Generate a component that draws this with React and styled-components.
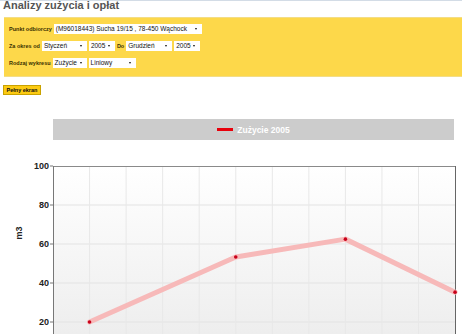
import styled, { createGlobalStyle } from 'styled-components';

const GlobalStyle = createGlobalStyle`
  html, body {
    margin: 0;
    padding: 0;
    background: #fff;
  }
  body {
    border-top: 1px solid #d3dce6;
    font-family: 'Liberation Sans', Arial, sans-serif;
    overflow: hidden;
  }
`;

const Page = styled.div`
  width: 462px;
  height: 333px;
  overflow: hidden;
`;

const Title = styled.h1`
  margin: -2px 0 0 3px;
  font-size: 11px;
  line-height: 12px;
  font-weight: bold;
  color: #555;
`;

const Filters = styled.div`
  margin: 6px 0 0 4px;
  height: 52px;
  padding: 6px 0 0 5px;
  background: #fdd84a;
  border-top: 1px solid #f3dd86;
  border-bottom: 1px solid #f3dd86;
  display: flex;
  flex-direction: column;
  gap: 7px;
`;

const Row = styled.div`
  display: flex;
  align-items: center;
  height: 10px;
  gap: 2px;
`;

const Label = styled.span`
  font-size: 5.5px;
  font-weight: bold;
  color: #3a3000;
  white-space: nowrap;
`;

const Select = styled.div`
  position: relative;
  box-sizing: border-box;
  width: ${(p) => p.$w}px;
  height: 10px;
  padding-left: 2px;
  background: #fff;
  font-size: 6.5px;
  line-height: 10px;
  color: #111;
  white-space: nowrap;
  overflow: hidden;
  &::after {
    content: '';
    position: absolute;
    right: 5px;
    top: 4px;
    border-left: 1.5px solid transparent;
    border-right: 1.5px solid transparent;
    border-top: 2px solid #111;
  }
`;

const FullButton = styled.button`
  display: block;
  margin: 8px 0 0 3px;
  width: 38px;
  height: 10px;
  padding: 0;
  background: #fcca12;
  border: 1px solid #c9a200;
  font-family: inherit;
  font-size: 5.5px;
  font-weight: bold;
  color: #111;
`;

const Chart = styled.section`
  margin-top: 24px;
`;

const ChartTitle = styled.div`
  margin-left: 53px;
  width: 401px;
  height: 21px;
  background: #cccccc;
  display: flex;
  align-items: center;
  justify-content: center;
  gap: 4px;
`;

const LegendLine = styled.span`
  width: 16px;
  height: 3px;
  background: #e8000b;
`;

const LegendText = styled.span`
  font-size: 8.5px;
  font-weight: bold;
  color: #fff;
`;

const Plot = styled.svg`
  display: block;
  margin-top: 6px;
`;

const TOP = 145;
const yOf = (v) => 360 - v * 1.95;
const colX = (k) => 53 + 36.55 * k;
const data = [
  [1, 20],
  [5, 53.3],
  [8, 62.5],
  [11, 35.3],
];

function LineChart() {
  const ticks = [100, 80, 60, 40, 20];
  const pts = data.map(([k, v]) => `${colX(k)},${yOf(v)}`).join(' ');
  return (
    <Plot width="462" height="189" viewBox={`0 ${TOP} 462 189`}>
      <defs>
        <linearGradient id="bg" x1="0" y1="0" x2="0" y2="1">
          <stop offset="0" stopColor="#ffffff" />
          <stop offset="1" stopColor="#ebebeb" />
        </linearGradient>
      </defs>
      <rect x="53" y="165" width="402" height="195" fill="url(#bg)" />
      {[80, 60, 40, 20].map((v) => (
        <line key={v} x1="53" x2="455" y1={yOf(v)} y2={yOf(v)} stroke="#e3e3e3" />
      ))}
      {Array.from({ length: 10 }, (_, i) => (
        <line key={i} x1={colX(i + 1)} x2={colX(i + 1)} y1="165" y2="334" stroke="#e8e8e8" />
      ))}
      <line x1="53" x2="455" y1="165.5" y2="165.5" stroke="#8a8a8a" />
      <line x1="53.5" x2="53.5" y1="165" y2="334" stroke="#777" />
      <line x1="455.5" x2="455.5" y1="165" y2="334" stroke="#666" />
      {ticks.map((v) => (
        <g key={v}>
          <line x1="50" x2="53" y1={yOf(v)} y2={yOf(v)} stroke="#777" />
          <text
            x="49"
            y={yOf(v) + 3}
            textAnchor="end"
            fontSize="9"
            fontWeight="bold"
            fill="#222"
            fontFamily="Liberation Sans, Arial, sans-serif"
          >
            {v}
          </text>
        </g>
      ))}
      <text
        x="0"
        y="0"
        transform="translate(22 232) rotate(-90)"
        textAnchor="middle"
        fontSize="9"
        fontWeight="bold"
        fill="#222"
        fontFamily="Liberation Sans, Arial, sans-serif"
      >
        m3
      </text>
      <polyline
        points={pts}
        fill="none"
        stroke="#f7b9b9"
        strokeWidth="5"
        strokeLinejoin="round"
        strokeLinecap="round"
      />
      {data.map(([k, v]) => (
        <circle key={k} cx={colX(k)} cy={yOf(v)} r="1.8" fill="#c8001a" />
      ))}
    </Plot>
  );
}

export default function App() {
  return (
    <Page>
      <GlobalStyle />
      <Title>Analizy zużycia i opłat</Title>
      <Filters>
        <Row>
          <Label>Punkt odbiorczy</Label>
          <Select $w={148}>(M96018443) Sucha 19/15 , 78-450 Wąchock</Select>
        </Row>
        <Row>
          <Label>Za okres od</Label>
          <Select $w={45}>Styczeń</Select>
          <Select $w={26}>2005</Select>
          <Label>Do</Label>
          <Select $w={46}>Grudzień</Select>
          <Select $w={26}>2005</Select>
        </Row>
        <Row>
          <Label>Rodzaj wykresu</Label>
          <Select $w={34}>Zużycie</Select>
          <Select $w={47}>Liniowy</Select>
        </Row>
      </Filters>
      <FullButton>Pełny ekran</FullButton>
      <Chart>
        <ChartTitle>
          <LegendLine />
          <LegendText>Zużycie 2005</LegendText>
        </ChartTitle>
        <LineChart />
      </Chart>
    </Page>
  );
}
